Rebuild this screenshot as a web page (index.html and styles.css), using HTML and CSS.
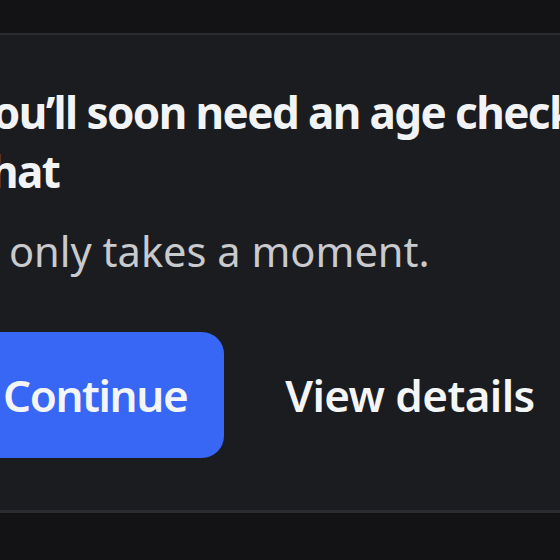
FILE: index.html
```html
<!DOCTYPE html>
<html lang="en">
<head>
<meta charset="utf-8">
<title>Age check</title>
<link rel="stylesheet" href="styles.css">
</head>
<body>
<div class="page">
  <section class="card">
    <div class="content">
      <h2 class="title">You’ll soon need an age check to<br>chat</h2>
      <p class="sub">It only takes a moment.</p>
      <div class="actions">
        <button class="btn primary">Continue</button>
        <button class="btn link">View details</button>
      </div>
    </div>
  </section>
</div>
</body>
</html>
```

FILE: styles.css
```css
html, body {
  margin: 0;
  padding: 0;
  background: #131315;
  width: 560px;
  height: 560px;
  overflow: hidden;
}
.page {
  padding-top: 33px;
  font-family: "Noto Sans", "Open Sans", sans-serif;
}
.card {
  background: #1b1c20;
  border-top: 2px solid #2b2c31;
  border-bottom: 3px solid #2b2c31;
  height: 480px;
  box-sizing: border-box;
}
.content {
  margin-left: -31px;
  width: 720px;
  padding-top: 48px;
}
.title {
  margin: 0;
  font-size: 44px;
  line-height: 59px;
  font-weight: 700;
  letter-spacing: -1.6px;
  color: #f2f3f5;
  white-space: nowrap;
}
.sub {
  margin: 25px 0 0;
  font-size: 41.6px;
  line-height: 50px;
  color: #c9cace;
}
.actions {
  display: flex;
  align-items: center;
  gap: 27px;
  margin-top: 56px;
}
.btn {
  font-family: inherit;
  font-size: 44px;
  font-weight: 600;
  letter-spacing: -1.2px;
  border: none;
  color: #f4f5f7;
  background: none;
  height: 126px;
  padding: 0 37px 0 34px;
  border-radius: 22px;
}
.primary {
  background: #3866f5;
  letter-spacing: -1.4px;
}
.link {
  padding: 0 34px;
  letter-spacing: -0.6px;
}
```
